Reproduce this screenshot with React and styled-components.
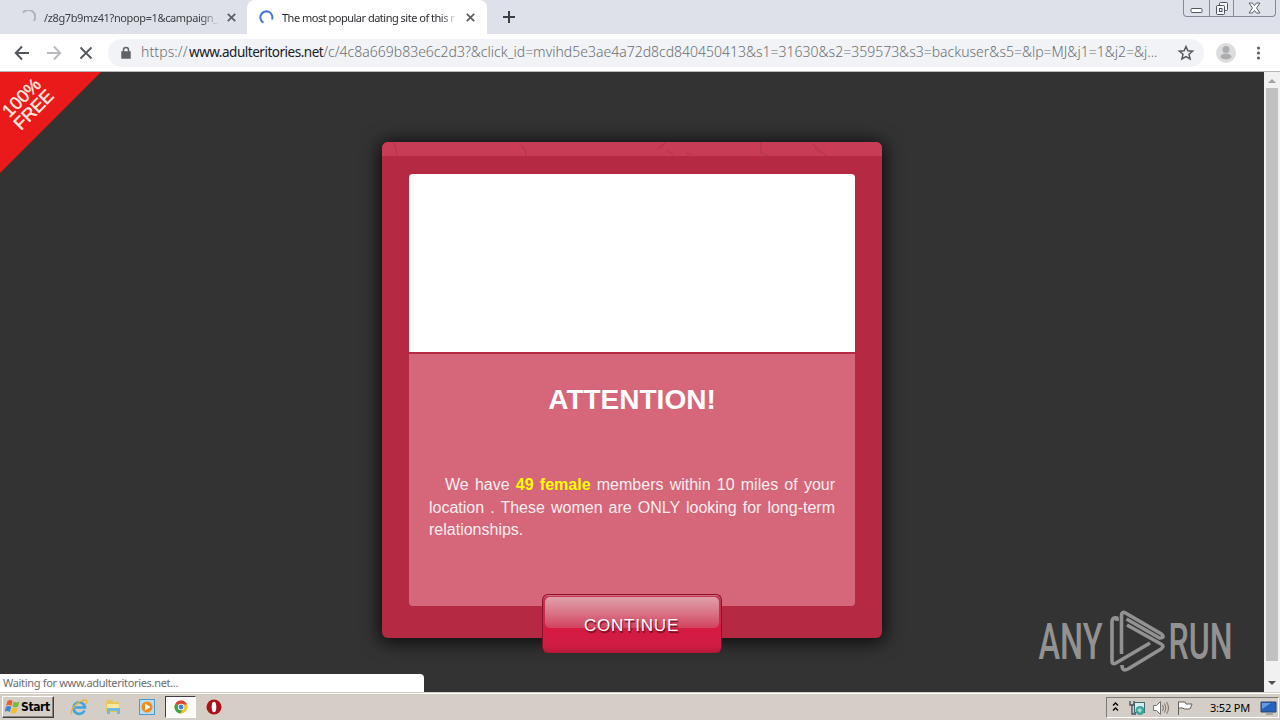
import React from 'react'
import styled, { createGlobalStyle, css } from 'styled-components';

const GlobalStyle = createGlobalStyle`
  * {
    box-sizing: border-box;
  }
  body {
    margin: 0;
    overflow: hidden;
    font-family: 'Noto Sans', 'Liberation Sans', sans-serif;
  }
`;

const Screen = styled.div`
  width: 1280px;
  height: 720px;
  display: flex;
  flex-direction: column;
  overflow: hidden;
`;

/* browser chrome */

const TabBar = styled.div`
  position: relative;
  display: flex;
  flex: 0 0 34px;
  background: #dee1e9;
`;

const Tab = styled.div`
  display: flex;
  align-items: center;
  width: ${props => props.$active ? 240 : 247}px;
  height: 34px;
  padding: 0 ${props => props.$active ? 12 : 11}px 0 ${props => props.$active ? 12 : 21}px;
  color: #3c4043;
  ${props => props.$active && css`
    background: #fff;
    border-radius: 8px 8px 0 0;
    color: #2b2d30;
  `}
`;

const TabTitle = styled.div`
  flex: 1;
  margin-left: 8px;
  font-size: 11px;
  letter-spacing: ${props => props.$spacing}px;
  white-space: nowrap;
  overflow: hidden;
  mask-image: linear-gradient(90deg, #000 90%, transparent);
`;

const TabClose = styled.svg`
  flex: none;
  margin-left: 8px;
`;

const NewTab = styled.svg`
  margin: 9px 0 0 14px;
`;

const WindowButtons = styled.div`
  display: flex;
  width: 93px;
  height: 17px;
  margin: 0 4px 0 auto;
  border: 1px solid #858995;
  border-top: 0;
  border-radius: 0 0 4px 4px;
`;

const WindowButton = styled.div`
  width: ${props => props.$width}px;
  display: flex;
  align-items: center;
  justify-content: center;
  & + & {
    border-left: 1px solid #858995;
  }
`;

const Toolbar = styled.div`
  display: flex;
  align-items: center;
  flex: 0 0 38px;
  padding-left: 14px;
  background: #fff;
  border-bottom: 1px solid #b9babb;
`;

const NavIcon = styled.svg`
  flex: none;
  margin-right: 16px;
`;

const AddressBar = styled.div`
  display: flex;
  align-items: center;
  flex: 0 0 1096px;
  height: 28px;
  margin-left: -2px;
  margin-right: 11px;
  padding: 0 9px 0 12px;
  border-radius: 14px;
  background: #f1f3f6;
`;

const Url = styled.div`
  display: flex;
  flex: 1;
  align-items: baseline;
  margin: 0 0 2px 9px;
  font-size: 14px;
  white-space: nowrap;
`;

const UrlPart = styled.span`
  flex: 0 0 ${props => props.$width}px;
  color: ${props => props.$host ? '#202124' : '#6b6f73'};
  font-size: ${props => props.$host ? 13.5 : 14}px;
  font-weight: ${props => props.$host ? 400 : 300};
  letter-spacing: ${props => props.$spacing}px;
`;

/* page */

const Viewport = styled.div`
  position: relative;
  display: flex;
  flex: 0 0 620px;
  background: #333;
`;

const Page = styled.div`
  flex: 1;
  display: flex;
  justify-content: center;
  align-items: flex-start;
  padding-top: 70px;
`;

const Ribbon = styled.div`
  position: absolute;
  top: 0;
  left: 0;
  width: 101px;
  height: 101px;
  background: #ea1a1a;
  clip-path: polygon(0 0, 100% 0, 0 100%);
`;

const RibbonText = styled.div`
  position: absolute;
  top: 15px;
  left: -12px;
  width: 80px;
  color: #ffece0;
  font: 18px/17px 'Liberation Sans', Arial, sans-serif;
  -webkit-text-stroke: .4px #ffece0;
  text-align: center;
  transform: rotate(-45deg);
`;

const Card = styled.div`
  position: relative;
  display: flex;
  flex-direction: column;
  align-items: center;
  width: 500px;
  height: 496px;
  border-radius: 6px;
  background: #b52943;
  box-shadow: 0 2px 18px 3px rgba(0, 0, 0, .75);
`;

const CardTop = styled.svg`
  display: block;
  flex: none;
  border-radius: 6px 6px 0 0;
  background: #c93c55;
`;

const Panel = styled.div`
  display: flex;
  flex-direction: column;
  width: 446px;
  height: 432px;
  margin-top: 18px;
  border-radius: 4px;
  overflow: hidden;
  background: #d66679;
  font-family: 'Liberation Sans', Arial, sans-serif;
  color: #fff;
`;

const Photo = styled.div`
  flex: 0 0 180px;
  background: #fff;
  border-bottom: 2px solid #b52943;
`;

const Heading = styled.h1`
  margin: 29px 0 0;
  font-size: 28px;
  line-height: 34px;
  text-align: center;
`;

const Message = styled.p`
  margin: 57px 20px 0;
  color: #fbeff1;
  font-size: 16px;
  line-height: 22.7px;
  text-align: justify;
  text-indent: 16px;
  b {
    color: #ff0;
  }
`;

const ContinueButton = styled.button`
  position: absolute;
  top: 452px;
  left: 160px;
  display: flex;
  align-items: center;
  justify-content: center;
  width: 180px;
  height: 59px;
  padding: 5px 1px 0 0;
  border: 1px solid #88122b;
  border-bottom-color: #b51737;
  border-radius: 6px;
  background: linear-gradient(#c33752, #cf2549 50%, #d61a42 58%, #cf1d43 90%, #b9193a);
  box-shadow: inset 0 1px #d76b80;
  color: #fff;
  font: 17px 'Liberation Sans', Arial, sans-serif;
  letter-spacing: .8px;
  text-shadow: 1px 2px 1px #6b1023;

  &::before {
    content: '';
    position: absolute;
    z-index: -1;
    top: 2px;
    left: 2px;
    right: 2px;
    height: 31px;
    border-radius: 5px;
    background: linear-gradient(#dfa0ab, #d97587 50%, #d2425f);
  }
  isolation: isolate;
`;

const Scrollbar = styled.div`
  width: 16px;
  display: flex;
  flex-direction: column;
  align-items: center;
  background: #f1f1f1;
`;

const ScrollThumb = styled.div`
  width: 12px;
  height: 573px;
  margin-top: 1px;
  background: #c1c1c1;
`;

const StatusBubble = styled.div`
  position: absolute;
  left: 0;
  bottom: 0;
  width: 424px;
  height: 18px;
  padding-left: 3px;
  border-radius: 0 4px 0 0;
  background: #fff;
  color: #6b6d70;
  font-size: 11px;
  line-height: 18px;
  letter-spacing: -.32px;
`;

const Watermark = styled.svg`
  position: absolute;
  left: 1036px;
  top: 536px;
`;

/* taskbar */

const Taskbar = styled.div`
  display: flex;
  align-items: center;
  flex: 0 0 28px;
  background: #d5cec6;
  border-top: 1px solid #d5cec6;
  box-shadow: inset 0 1px #fff;
`;

const StartButton = styled.div`
  display: flex;
  align-items: center;
  width: 52px;
  height: 22px;
  margin: 1px 0 0 2px;
  padding-left: 1px;
  border: 1px solid;
  border-color: #fff #404040 #404040 #fff;
  box-shadow: inset -1px -1px #87827b;
  font: bold 12px 'DejaVu Sans Condensed', 'DejaVu Sans', sans-serif;
  letter-spacing: -.4px;
  color: #000;
`;

const QuickLaunch = styled.div`
  display: flex;
  align-items: center;
  margin: 1px 0 0 8px;
`;

const LaunchItem = styled.div`
  display: flex;
  align-items: center;
  justify-content: center;
  width: 34px;
  height: 22px;
  ${props => props.$pressed && css`
    width: 31px;
    margin: 0 1px 0 1px;
    background: #fbfaf9;
    border: 1px solid;
    border-color: #404040 #fff #fff #404040;
  `}
`;

const Tray = styled.div`
  display: flex;
  align-items: center;
  width: 173px;
  height: 21px;
  margin: 2px 1px 0 auto;
  padding-left: 4px;
  border: 1px solid;
  border-color: #7d7973 #fff #fff #7d7973;
  svg {
    flex: none;
  }
`;

const TrayIcons = styled.div`
  display: flex;
  align-items: center;
  margin-left: 8px;
`;

const Clock = styled.div`
  width: 50px;
  margin: -1px 0 0 16px;
  color: #000;
  font-size: 11px;
  letter-spacing: -.2px;
  white-space: nowrap;
`;

const Spinner = ({ color, d }) => (
  <svg width="15" height="15" viewBox="0 0 15 15" fill="none" stroke={color} strokeWidth="2">
    <path d={d} />
  </svg>
)

const CloseIcon = () => (
  <TabClose width="9" height="9" viewBox="0 0 9 9" stroke="#5a5d61" strokeWidth="1.7">
    <path d="M.8.8l7.4 7.4M8.2.8L.8 8.2" />
  </TabClose>
)

const Tabs = () => (
  <TabBar>
    <Tab>
      <Spinner color="#b1b5bb" d="M2 2.6A6 6 0 0 1 12.8 10.8" />
      <TabTitle $spacing={-.38}>/z8g7b9mz41?nopop=1&amp;campaign_i</TabTitle>
      <CloseIcon />
    </Tab>
    <Tab $active>
      <Spinner color="#4377d3" d="M4.4 12.6A6 6 0 1 1 13 9.5" />
      <TabTitle $spacing={-.5}>The most popular dating site of this r</TabTitle>
      <CloseIcon />
    </Tab>
    <NewTab width="15" height="15" stroke="#3c4043" strokeWidth="2">
      <path d="M8 2v12M2 8h12" />
    </NewTab>
    <WindowButtons>
      <WindowButton $width={25}>
        <svg width="13" height="17" fill="#fff" stroke="#555963">
          <rect x="1" y="8.500" width="11" height="4" rx="1" />
        </svg>
      </WindowButton>
      <WindowButton $width={25}>
        <svg width="14" height="15" fill="#f5f6f8" stroke="#4f535d">
          <rect x="4.500" y="1.500" width="8" height="8" rx="1" />
          <rect x="1.500" y="4.500" width="8" height="9" rx="1" />
          <rect x="4.500" y="7.500" width="2.500" height="3" />
        </svg>
      </WindowButton>
      <WindowButton $width={42}>
        <svg width="13" height="12" fill="#fff" stroke="#60646e">
          <path d="M1 1h3.500l2 2.500 2-2.500H12L8.500 6 12 11H8.500l-2-2.500-2 2.500H1l3.500-5z" />
        </svg>
      </WindowButton>
    </WindowButtons>
  </TabBar>
)

const AddressRow = () => (
  <Toolbar>
    <NavIcon width="16" height="16" fill="none" stroke="#53565a" strokeWidth="2">
      <path d="M15 8H2M8 1.500L1.800 8 8 14.500" />
    </NavIcon>
    <NavIcon width="16" height="16" fill="none" stroke="#b8babd" strokeWidth="2">
      <path d="M1 8h13M8 1.500L14.200 8 8 14.500" />
    </NavIcon>
    <NavIcon width="16" height="16" fill="none" stroke="#53565a" strokeWidth="1.800">
      <path d="M2.500 2.500l11 11M13.500 2.500l-11 11" />
    </NavIcon>
    <AddressBar>
      <svg width="12" height="14" fill="none" stroke="#5f6368" strokeWidth="1.500">
        <path d="M3.500 6V4a2.500 2.500 0 0 1 5 0v2" />
        <rect x="2" y="6" width="8" height="6" fill="#5f6368" />
      </svg>
      <Url>
        <UrlPart $width={48} $spacing={.1}>https://</UrlPart>
        <UrlPart $width={134} $spacing={-.48} $host>www.adulteritories.net</UrlPart>
        <UrlPart $width={834} $spacing={0}>/c/4c8a669b83e6c2d3?&amp;click_id=mvihd5e3ae4a72d8cd840450413&amp;s1=31630&amp;s2=359573&amp;s3=backuser&amp;s5=&amp;lp=MJ&amp;j1=1&amp;j2=&amp;j...</UrlPart>
      </Url>
      <svg width="18" height="18" viewBox="0 0 18 18" fill="none" stroke="#55585c" strokeWidth="1.500">
        <path d="M9 2.500l1.900 4.300 4.700.4-3.600 3.100 1.100 4.600L9 12.500l-4.100 2.400L6 10.300 2.400 7.200l4.700-.4z" />
      </svg>
    </AddressBar>
    <svg width="22" height="22" viewBox="-1 -1 22 22">
      <circle cx="10" cy="10" r="10" fill="#dcdddf" />
      <circle cx="10" cy="6.500" r="3.500" fill="#adadad" />
      <ellipse cx="10" cy="13.500" rx="5.500" ry="3" fill="#adadad" />
    </svg>
    <svg width="42" height="16" fill="#5f6368">
      <circle cx="21.500" cy="3" r="1.600" />
      <circle cx="21.500" cy="8" r="1.600" />
      <circle cx="21.500" cy="13" r="1.600" />
    </svg>
  </Toolbar>
)

const AnyRun = () => (
  <Watermark width="200" height="70" viewBox="1036 608 200 70">
    <g fill="#929292" fontFamily="Roboto, sans-serif" fontSize="50" fontWeight="500">
      <text x="1038.500" y="659" textLength="64" lengthAdjust="spacingAndGlyphs">ANY</text>
      <text x="1168.500" y="659" textLength="64" lengthAdjust="spacingAndGlyphs">RUN</text>
    </g>
    <g fill="none" stroke="#929292" strokeWidth="3.600" strokeLinejoin="round">
      <path d="M1117 621v-3q-5-1-5 4v39q0 4 4 2l34-20" />
      <path d="M1121.500 654v-38q0-5 4-3l36 21q4 4-2 4l-33-19" />
      <path d="M1122 665q0 7 6 4l33-20q4-3 0-5l-34-19" />
    </g>
  </Watermark>
)

const Landing = () => (
  <Viewport>
    <Page>
      <Card>
        <CardTop width="500" height="14" fill="none" stroke="#b23750" strokeWidth="1.300">
          <path d="M12 0l3 13M139 3l5 6v5M276 7l8-7M286 9l5 4M304 11l7 2M379 0v11l8 3M431 2l6 7 8 5" />
        </CardTop>
        <Panel>
          <Photo />
          <Heading>ATTENTION!</Heading>
          <Message>
            We have <b>49 female</b> members within 10 miles of your location . These women are ONLY looking for long-term relationships.
          </Message>
        </Panel>
        <ContinueButton>CONTINUE</ContinueButton>
      </Card>
    </Page>
    <Scrollbar>
      <svg width="16" height="15" fill="#a3a3a3">
        <path d="M4 11l4-4 4 4z" />
      </svg>
      <ScrollThumb />
      <svg width="16" height="31" fill="#505050">
        <path d="M4 20h8l-4 4z" />
      </svg>
    </Scrollbar>
    <Ribbon>
      <RibbonText>100%<br />FREE</RibbonText>
    </Ribbon>
    <AnyRun />
    <StatusBubble>Waiting for www.adulteritories.net...</StatusBubble>
  </Viewport>
)

const Bottom = () => (
  <Taskbar>
    <StartButton>
      <svg width="17" height="16" viewBox="0 0 16 16">
        <path d="M3 2q3-2 5 0L7 7Q4 5 1.500 7z" fill="#e8602c" />
        <path d="M9 2.500q3 2 6 0L13.500 7.500q-3 2-5.500 0z" fill="#79b93c" />
        <path d="M1.300 8q3-2 5.500 0l-1.500 5q-3-2-5 0z" fill="#3d83d6" />
        <path d="M7.700 8.500q3 2 5.600 0l-1.500 5q-3 2-5.500 0z" fill="#f4bd2c" />
      </svg>
      Start
    </StartButton>
    <QuickLaunch>
      <LaunchItem>
        <svg width="18" height="18" viewBox="0 0 18 18" fill="none">
          <path d="M14.500 12.500A5.800 5.800 0 1 1 15 9.500H5" stroke="#3fa5df" strokeWidth="2.600" />
          <path d="M2 16C-1 13 7 3 15 2q3 0 1 4" stroke="#e6b73c" strokeWidth="1.400" />
        </svg>
      </LaunchItem>
      <LaunchItem>
        <svg width="18" height="18" viewBox="0 0 18 18">
          <path d="M2 4l1-2h5l1 2h6v10H2z" fill="#e8c65a" />
          <path d="M3 6h12v7H3z" fill="#f8e9a0" />
          <path d="M3 10h13v6h-3v-3H6v3H3z" fill="#72b9df" />
        </svg>
      </LaunchItem>
      <LaunchItem>
        <svg width="18" height="18" viewBox="0 0 18 18">
          <rect x="1.500" y="1.500" width="15" height="15" fill="#b8dcf4" stroke="#4c9bd0" />
          <circle cx="9" cy="9" r="5.500" fill="#f18c18" />
          <path d="M7 5.500L12.500 9 7 12.500z" fill="#fff" />
        </svg>
      </LaunchItem>
      <LaunchItem $pressed>
        <svg width="14" height="14" viewBox="0 0 14 14">
          <circle cx="7" cy="7" r="6.500" fill="#f5c62b" />
          <path d="M7 7L1.300 3.800A6.500 6.500 0 0 1 13 4.500H7z" fill="#df4534" />
          <path d="M7 7L1.300 3.800A6.500 6.500 0 0 0 6.500 13.500L9 9z" fill="#3fa251" />
          <circle cx="7" cy="7" r="3.200" fill="#fff" />
          <circle cx="7" cy="7" r="2.400" fill="#4382df" />
        </svg>
      </LaunchItem>
      <LaunchItem>
        <svg width="16" height="16" viewBox="0 0 16 16">
          <circle cx="8" cy="8" r="7.500" fill="#aa1118" />
          <ellipse cx="8" cy="8" rx="2.300" ry="5.300" fill="#fff" />
        </svg>
      </LaunchItem>
    </QuickLaunch>
    <Tray>
      <svg width="9" height="14" fill="none" stroke="#000" strokeWidth="1.300">
        <path d="M2 4.500L4.500 2 7 4.500M2 9.500L4.500 7 7 9.500" />
      </svg>
      <TrayIcons>
        <svg width="18" height="18" viewBox="0 0 18 18">
          <rect x="6.500" y="3.500" width="10" height="10" fill="#d7eeee" stroke="#456b72" />
          <circle cx="12" cy="11.500" r="4.500" fill="#3aa59b" />
          <path d="M9 11l3-2 2 2-2 3z" fill="#a3e0c8" />
          <path d="M2 2v4h4V2M4 6v9h4" fill="none" stroke="#42535b" strokeWidth="1.300" />
        </svg>
        <svg width="28" height="18" viewBox="0 0 28 18" fill="none" stroke="#77736e">
          <path d="M7.500 6.500h3l4-4v13l-4-4h-3z" fill="#fff" />
          <path d="M16.500 6q2 3 0 6M18.500 4.500q3 4.500 0 9M20.500 3q4 6 0 12" />
        </svg>
        <svg width="20" height="18" viewBox="0 0 20 18" fill="#fff" stroke="#65615c">
          <path d="M4.500 16V2.500M5 3h6l1 2h6l-2 5h-6L9 9H5" />
        </svg>
      </TrayIcons>
      <Clock>3:52 PM</Clock>
      <svg width="18" height="16" viewBox="0 0 18 16">
        <path d="M1 2h15v10H1z" fill="#2861bd" stroke="#2b4770" />
        <path d="M2 3h9L2 9z" fill="#659be4" />
        <path d="M6 14h7" stroke="#6f7986" />
      </svg>
    </Tray>
  </Taskbar>
)

const App = () => {
  return <Screen>
    <GlobalStyle />
    <Tabs />
    <AddressRow />
    <Landing />
    <Bottom />
  </Screen>
}

export default App;
